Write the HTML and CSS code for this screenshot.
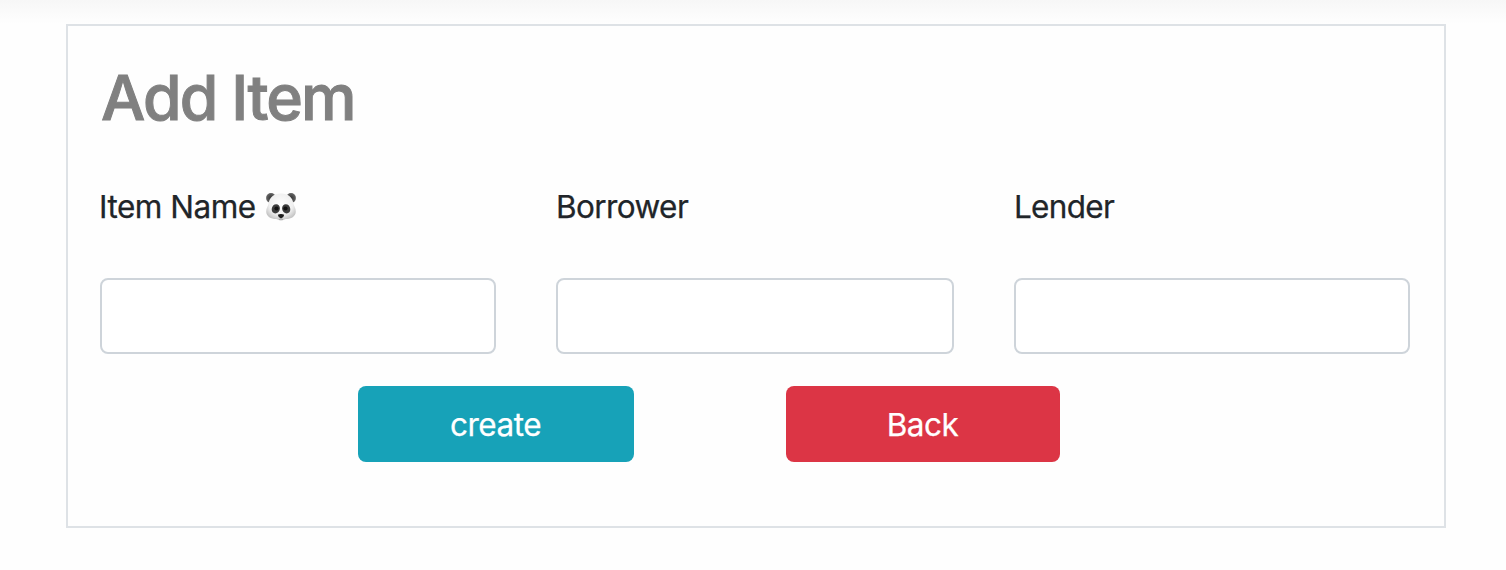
FILE: index.html
```html
<!DOCTYPE html>
<html lang="en">
<head>
<meta charset="utf-8">
<title>Add Item</title>
<link rel="stylesheet" href="styles.css">
</head>
<body>
<main class="page">
  <form class="card">
    <h1 class="title">Add Item</h1>
    <div class="fields">
      <div class="field">
        <label class="label" for="item"><span>Item Name</span>
          <svg class="panda" viewBox="0 0 32 30" aria-hidden="true">
            <defs>
              <radialGradient id="face" cx=".5" cy=".4" r=".6">
                <stop offset="0" stop-color="#fff"/><stop offset=".65" stop-color="#f0f0f0"/><stop offset="1" stop-color="#c4c4c4"/>
              </radialGradient>
              <radialGradient id="ear"><stop offset="0" stop-color="#333"/><stop offset="1" stop-color="#666"/></radialGradient>
            </defs>
            <circle cx="6" cy="6" r="4.900" fill="url(#ear)"/>
            <circle cx="26" cy="6" r="4.900" fill="url(#ear)"/>
            <path d="M16 1.500C9 1.500 4.200 5.500 3.500 12C2.800 14.500 1.200 16 1.200 19.500C1.200 24.500 6 27 11 27C12.500 27 13.500 28.500 16 28.500S19.500 27 21 27C26 27 30.800 24.500 30.800 19.500C30.800 16 29.200 14.500 28.500 12C27.800 5.500 23 1.500 16 1.500Z" fill="url(#face)"/>
            <ellipse cx="10.800" cy="16.800" rx="4" ry="4.700" fill="#3c3c3c" transform="rotate(24 10.800 16.800)"/>
            <ellipse cx="21.200" cy="16.800" rx="4" ry="4.700" fill="#3c3c3c" transform="rotate(-24 21.200 16.800)"/>
            <circle cx="11.500" cy="16.500" r="2.100" fill="#111"/><circle cx="20.500" cy="16.500" r="2.100" fill="#111"/>
            <path d="M12.800 22.800Q16 21.400 19.200 22.800Q19 25.200 16 26.500Q13 25.200 12.800 22.800Z" fill="#1c1c1c"/>
            <path d="M14 27.500Q16 26.700 18 27.500" fill="none" stroke="#888" stroke-width=".6"/>
          </svg>
        </label>
        <input class="input" id="item" type="text">
      </div>
      <div class="field">
        <label class="label label-borrower" for="borrower">Borrower</label>
        <input class="input" id="borrower" type="text">
      </div>
      <div class="field">
        <label class="label label-lender" for="lender">Lender</label>
        <input class="input" id="lender" type="text">
      </div>
    </div>
    <div class="actions">
      <button class="button button-create" type="button">create</button>
      <button class="button button-back" type="button">Back</button>
    </div>
  </form>
</main>
</body>
</html>
```
FILE: styles.css
```css
* { box-sizing: border-box; }
body {
  margin: 0;
  background: #fefefe;
  color: #212529;
  font-family: Inter, "Liberation Sans", sans-serif;
}
.page {
  height: 570px;
  padding: 24px 60px 0 66px;
  background: linear-gradient(#f7f7f7, #fefefe 24px);
}
.card {
  height: 504px;
  padding: 31px 34px 0 32px;
  border: 2px solid #dee2e6;
  background: #fefefe;
}
.title {
  margin: 0 0 0 1px;
  color: #808080;
  font-size: 62.500px;
  font-weight: 500;
  line-height: 80px;
  letter-spacing: -1.850px;
  -webkit-text-stroke: 1px #808080;
}
.fields {
  display: grid;
  grid-template-columns: 396px 398px 396px;
  column-gap: 60px;
  margin-top: 46px;
}
.field { display: flex; flex-direction: column; }
.label {
  display: flex;
  align-items: center;
  height: 48px;
  margin: 0 0 47px -1px;
  font-size: 31.500px;
  line-height: 48px;
  letter-spacing: -.500px;
  -webkit-text-stroke: .25px #212529;
}
.label-borrower { margin-left: 0; letter-spacing: -.600px; }
.label-lender { margin-left: 0; letter-spacing: -.700px; }
.panda { width: 32px; height: 30px; margin-left: 9px; -webkit-text-stroke: 0; }
.input {
  width: 100%;
  height: 76px;
  padding: 12px 24px;
  border: 2px solid #ced4da;
  border-radius: 8px;
  background: #fff;
  font: inherit;
  font-size: 32px;
  outline: none;
}
.actions { display: flex; gap: 152px; margin: 32px 0 0 258px; }
.button {
  width: 276px;
  height: 76px;
  padding: 2px 1px 0 0;
  border: 0;
  border-radius: 8px;
  color: #fff;
  font: inherit;
  font-size: 31.500px;
  line-height: 48px;
  letter-spacing: -.500px;
  -webkit-text-stroke: .25px #fff;
}
.button-create { background: #17a2b8; }
.button-back { width: 274px; background: #dc3545; }
```
